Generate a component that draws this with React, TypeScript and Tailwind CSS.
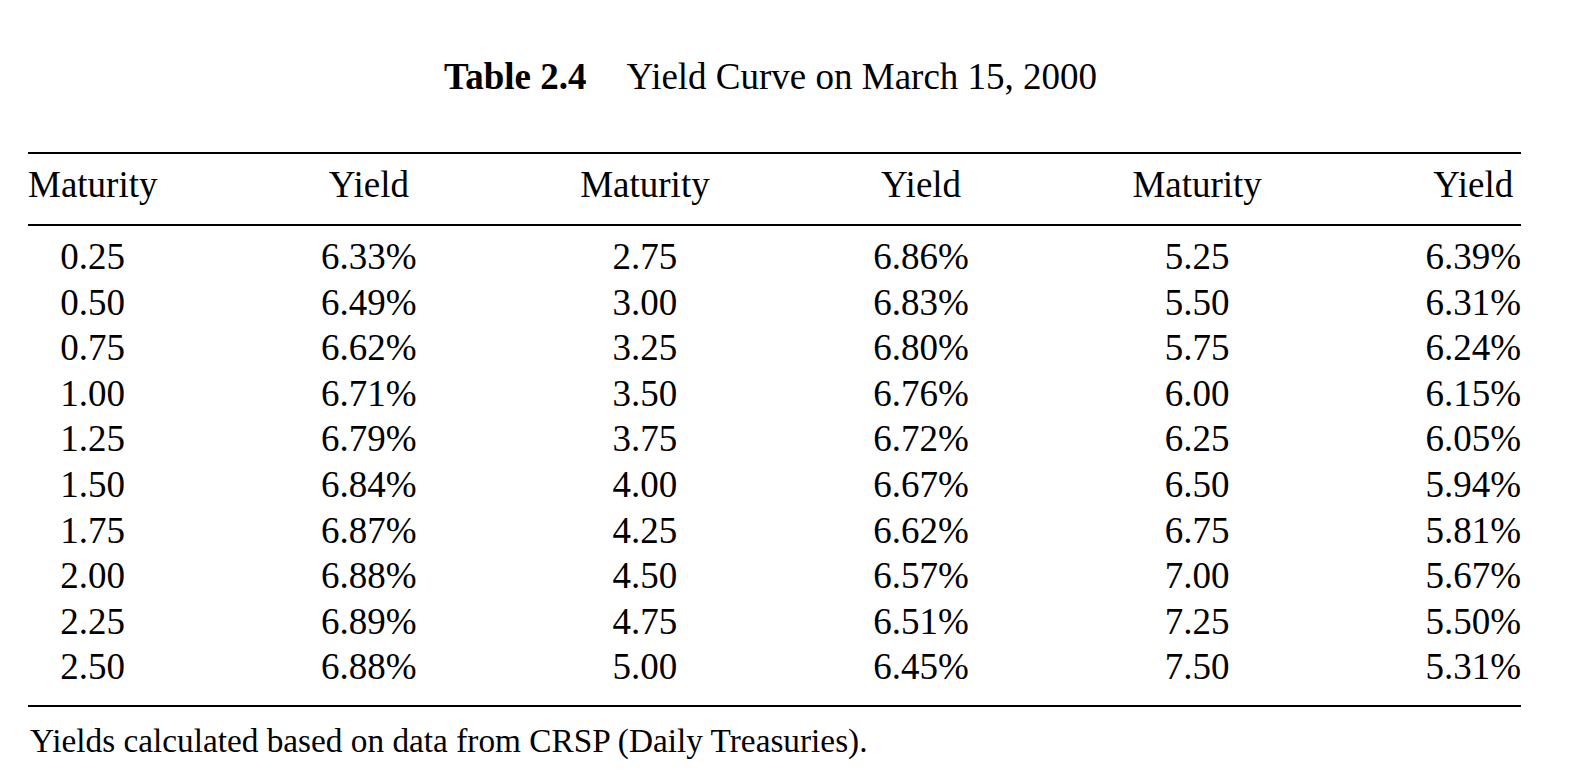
const rows: [string, string, string, string, string, string][] = [
  ["0.25", "6.33%", "2.75", "6.86%", "5.25", "6.39%"],
  ["0.50", "6.49%", "3.00", "6.83%", "5.50", "6.31%"],
  ["0.75", "6.62%", "3.25", "6.80%", "5.75", "6.24%"],
  ["1.00", "6.71%", "3.50", "6.76%", "6.00", "6.15%"],
  ["1.25", "6.79%", "3.75", "6.72%", "6.25", "6.05%"],
  ["1.50", "6.84%", "4.00", "6.67%", "6.50", "5.94%"],
  ["1.75", "6.87%", "4.25", "6.62%", "6.75", "5.81%"],
  ["2.00", "6.88%", "4.50", "6.57%", "7.00", "5.67%"],
  ["2.25", "6.89%", "4.75", "6.51%", "7.25", "5.50%"],
  ["2.50", "6.88%", "5.00", "6.45%", "7.50", "5.31%"],
];

const headers = ["Maturity", "Yield", "Maturity", "Yield", "Maturity", "Yield"];

export default function App() {
  return (
    <div className="min-h-screen w-full bg-white font-['Liberation_Serif','Times_New_Roman',serif] text-[37px] leading-[40px] text-black">
      <div className="ml-[28px] w-[1493px] pt-[57px]">
        {/* caption */}
        <div className="flex justify-center pr-[8px]">
          <span className="font-bold">Table 2.4</span>
          <span className="ml-[40px]">Yield Curve on March 15, 2000</span>
        </div>

        {/* table */}
        <div className="mt-[55px] grid grid-cols-[repeat(6,auto)] justify-between border-t-2 border-black">
          {headers.map((h, i) => (
            <div key={i} className="pt-[11px] pb-[19px] text-center">
              {h}
            </div>
          ))}
          <div className="col-span-6 h-[2px] bg-black" />
          <div className="col-span-6 h-[8px]" />
          {rows.map((r, ri) =>
            r.map((cell, ci) => (
              <div key={`${ri}-${ci}`} className="text-center leading-[45.6px]">
                {cell}
              </div>
            ))
          )}
          <div className="col-span-6 h-[15px]" />
          <div className="col-span-6 h-[2px] bg-black" />
        </div>

        {/* note */}
        <p className="mt-[14px] pl-[2px] text-[33.3px] leading-[40px]">
          Yields calculated based on data from CRSP (Daily Treasuries).
        </p>
      </div>
    </div>
  );
}
